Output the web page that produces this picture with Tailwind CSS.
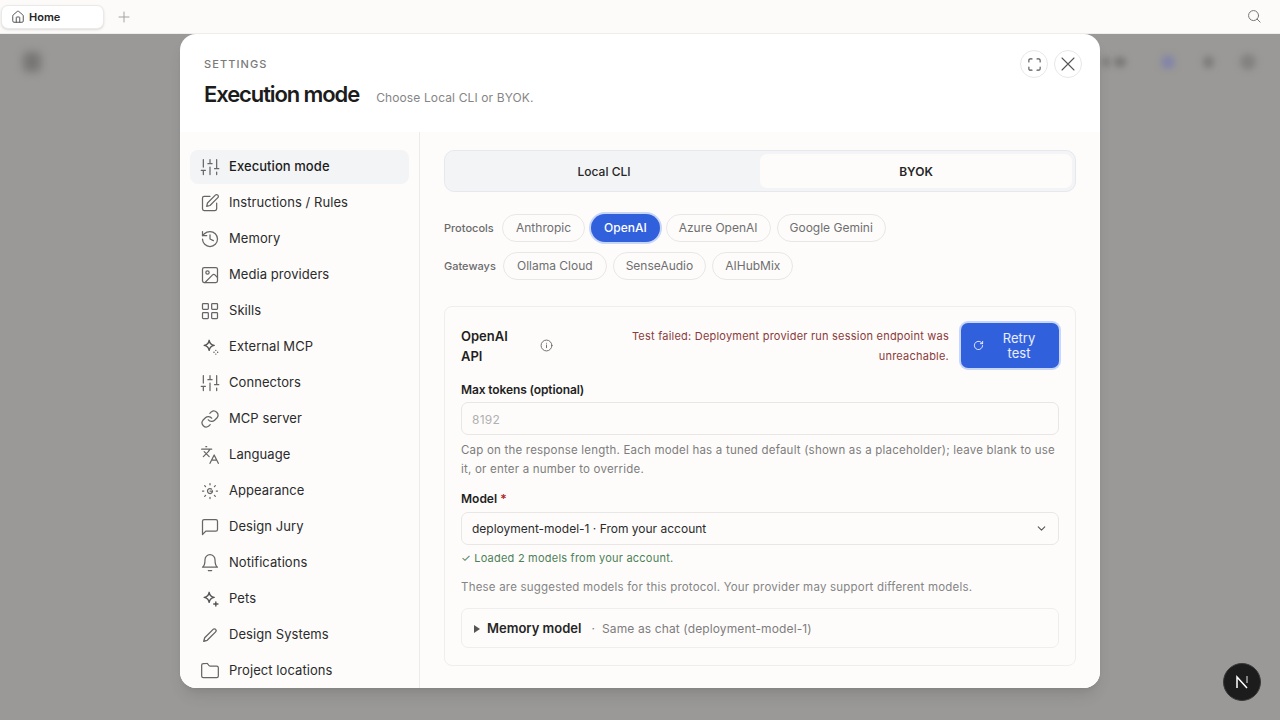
<!DOCTYPE html>
<html lang="en">
<head>
    <meta charset="UTF-8" />
    <meta name="viewport" content="width=device-width, initial-scale=1.0" />
    <script src="https://cdn.jsdelivr.net/npm/@tailwindcss/browser@4"></script>
    <title>Settings</title>
</head>
<body class="bg-[#9a9997] font-['Inter',sans-serif] w-[1280px] h-[720px] overflow-hidden relative">
    <!-- top bar -->
    <div class="h-[34px] bg-[#fcfbfa] border-b border-[#eeedeb] flex items-center pl-[1px] pr-[18px]">
        <div class="w-[103px] h-[24px] mt-[1px] bg-white border border-[#eceae8] rounded-[7px] shadow-sm flex items-center pl-[9px] gap-[4px] text-[11px] font-semibold text-[#262626]">
            <svg class="w-[14px] h-[14px] text-[#555]" viewBox="0 0 24 24" fill="none" stroke="currentColor" stroke-width="1.7" stroke-linecap="round" stroke-linejoin="round"><path d="M15 21v-8a1 1 0 0 0-1-1h-4a1 1 0 0 0-1 1v8"/><path d="M3 10a2 2 0 0 1 .7-1.5l7-6a2 2 0 0 1 2.6 0l7 6A2 2 0 0 1 21 10v9a2 2 0 0 1-2 2H5a2 2 0 0 1-2-2z"/></svg>
            <span class="pt-[1px]">Home</span>
        </div>
        <svg class="w-[12px] h-[12px] ml-[14px] text-[#a3a3a3]" viewBox="0 0 24 24" fill="none" stroke="currentColor" stroke-width="2" stroke-linecap="round"><path d="M12 2v20M2 12h20"/></svg>
        <svg class="w-[15px] h-[15px] ml-auto text-[#777]" viewBox="0 0 24 24" fill="none" stroke="currentColor" stroke-width="1.6" stroke-linecap="round"><circle cx="10.5" cy="10.5" r="8"/><path d="m21 21-4.8-4.8"/></svg>
    </div>

    <!-- blurred things behind the dialog -->
    <div class="absolute left-[23px] top-[52px] w-[18px] h-[20px] rounded-[5px] bg-[#777675] blur-[4px]"></div>
    <div class="absolute left-[1102px] top-[57px] w-[8px] h-[10px] rounded-full bg-[#7f7e7d] blur-[3px]"></div>
    <div class="absolute left-[1114px] top-[57px] w-[12px] h-[10px] rounded-full bg-[#787776] blur-[3px]"></div>
    <div class="absolute left-[1161px] top-[55px] w-[14px] h-[14px] rounded-full bg-[#8385a8] blur-[3px]"></div>
    <div class="absolute left-[1203px] top-[56px] w-[11px] h-[12px] rounded-full bg-[#7d7c7b] blur-[3px]"></div>
    <div class="absolute left-[1240px] top-[54px] w-[16px] h-[16px] rounded-full bg-[#838281] blur-[3px]"></div>

    <!-- dialog -->
    <div class="absolute left-[180px] top-[34px] w-[920px] h-[654px] bg-white rounded-[16px] overflow-hidden flex flex-col shadow-lg">
        <div class="h-[98px] shrink-0 flex items-start justify-between pl-[24px] pr-[18px]">
            <div class="pt-[24px]">
                <div class="text-[11px] leading-[13px] font-medium tracking-[0.1em] text-[#7a7a7a]">SETTINGS</div>
                <div class="flex items-baseline gap-[17px] mt-[9px]">
                    <h1 class="text-[22px] leading-[28px] font-semibold tracking-[-0.05em] text-[#1c1c1c]">Execution mode</h1>
                    <span class="text-[12px] text-[#858585] tracking-[0.01em]">Choose Local CLI or BYOK.</span>
                </div>
            </div>
            <div class="flex gap-[6px] pt-[16px]">
                <div class="w-[28px] h-[28px] rounded-full border border-[#e8e7e5] flex items-center justify-center text-[#555]">
                    <svg class="w-[15px] h-[15px]" viewBox="0 0 24 24" fill="none" stroke="currentColor" stroke-width="1.8" stroke-linecap="round" stroke-linejoin="round"><path d="M3 8V5a2 2 0 0 1 2-2h3M16 3h3a2 2 0 0 1 2 2v3M21 16v3a2 2 0 0 1-2 2h-3M8 21H5a2 2 0 0 1-2-2v-3"/></svg>
                </div>
                <div class="w-[28px] h-[28px] rounded-full border border-[#e8e7e5] flex items-center justify-center text-[#555]">
                    <svg class="w-[16px] h-[16px]" viewBox="0 0 24 24" fill="none" stroke="currentColor" stroke-width="1.6" stroke-linecap="round"><path d="M3 3l18 18M21 3 3 21"/></svg>
                </div>
            </div>
        </div>

        <div class="flex flex-1 min-h-0 bg-[#fdfcfb]">
            <!-- sidebar -->
            <nav class="w-[240px] shrink-0 border-r border-[#ecebe9] pl-[10px] pr-[10px] pt-[18px] overflow-hidden flex flex-col gap-[2px] text-[13px] text-[#2b2b2b] tracking-[0.005em]">
                <div class="h-[34px] shrink-0 rounded-[8px] bg-[#f3f4f6] flex items-center pl-[10px] gap-[9px] font-medium text-[#1c1c1c]">
                    <svg class="w-[20px] h-[20px] shrink-0 text-[#666]" viewBox="0 0 24 24" fill="none" stroke="currentColor" stroke-width="1.5" stroke-linecap="round"><path d="M4 3v9M4 16v5M12 3v5M12 12v9M20 3v11M20 18v3M1.5 16h5M9.5 8h5M17.5 14h5"/></svg>
                    Execution mode
                </div>
                <div class="h-[34px] shrink-0 rounded-[8px] flex items-center pl-[10px] gap-[9px]">
                    <svg class="w-[20px] h-[20px] shrink-0 text-[#666]" viewBox="0 0 24 24" fill="none" stroke="currentColor" stroke-width="1.5" stroke-linecap="round" stroke-linejoin="round"><path d="M12 4H5a2 2 0 0 0-2 2v13a2 2 0 0 0 2 2h13a2 2 0 0 0 2-2v-7"/><path d="M18.4 2.6a2.1 2.1 0 1 1 3 3L12 15l-4 1 1-4z"/></svg>
                    Instructions / Rules
                </div>
                <div class="h-[34px] shrink-0 rounded-[8px] flex items-center pl-[10px] gap-[9px]">
                    <svg class="w-[20px] h-[20px] shrink-0 text-[#666]" viewBox="0 0 24 24" fill="none" stroke="currentColor" stroke-width="1.5" stroke-linecap="round" stroke-linejoin="round"><path d="M3 12a9 9 0 1 0 9-9 9.75 9.75 0 0 0-6.74 2.74L3 8"/><path d="M3 3v5h5"/><path d="M12 7v5l4 2"/></svg>
                    Memory
                </div>
                <div class="h-[34px] shrink-0 rounded-[8px] flex items-center pl-[10px] gap-[9px]">
                    <svg class="w-[20px] h-[20px] shrink-0 text-[#666]" viewBox="0 0 24 24" fill="none" stroke="currentColor" stroke-width="1.5" stroke-linecap="round" stroke-linejoin="round"><rect x="3" y="3" width="18" height="18" rx="2"/><circle cx="9" cy="9" r="2"/><path d="m21 15-3.1-3.1a2 2 0 0 0-2.8 0L6 21"/></svg>
                    Media providers
                </div>
                <div class="h-[34px] shrink-0 rounded-[8px] flex items-center pl-[10px] gap-[9px]">
                    <svg class="w-[20px] h-[20px] shrink-0 text-[#666]" viewBox="0 0 24 24" fill="none" stroke="currentColor" stroke-width="1.5" stroke-linejoin="round"><rect x="3" y="3" width="7" height="7" rx="1"/><rect x="14" y="3" width="7" height="7" rx="1"/><rect x="3" y="14" width="7" height="7" rx="1"/><rect x="14" y="14" width="7" height="7" rx="1"/></svg>
                    Skills
                </div>
                <div class="h-[34px] shrink-0 rounded-[8px] flex items-center pl-[10px] gap-[9px]">
                    <svg class="w-[20px] h-[20px] shrink-0 text-[#555]" viewBox="0 0 24 24" fill="none" stroke="currentColor" stroke-width="1.7" stroke-linecap="round" stroke-linejoin="round"><path d="M11 4c.6 3.600 2.400 5.400 6 6-3.600.6-5.400 2.400-6 6-.6-3.600-2.400-5.400-6-6 3.600-.6 5.400-2.400 6-6z"/><path d="M19 16v.01M19 20.500v.01M16.800 18.300h.01M21.200 18.300h.01"/></svg>
                    External MCP
                </div>
                <div class="h-[34px] shrink-0 rounded-[8px] flex items-center pl-[10px] gap-[9px]">
                    <svg class="w-[20px] h-[20px] shrink-0 text-[#666]" viewBox="0 0 24 24" fill="none" stroke="currentColor" stroke-width="1.5" stroke-linecap="round"><path d="M4 3v9M4 16v5M12 3v5M12 12v9M20 3v11M20 18v3M1.5 16h5M9.500 8h5M17.500 14h5"/></svg>
                    Connectors
                </div>
                <div class="h-[34px] shrink-0 rounded-[8px] flex items-center pl-[10px] gap-[9px]">
                    <svg class="w-[20px] h-[20px] shrink-0 text-[#666]" viewBox="0 0 24 24" fill="none" stroke="currentColor" stroke-width="1.5" stroke-linecap="round" stroke-linejoin="round"><path d="M10 13a5 5 0 0 0 7.500.5l3-3a5 5 0 0 0-7-7l-1.700 1.700"/><path d="M14 11a5 5 0 0 0-7.500-.5l-3 3a5 5 0 0 0 7 7l1.700-1.700"/></svg>
                    MCP server
                </div>
                <div class="h-[34px] shrink-0 rounded-[8px] flex items-center pl-[10px] gap-[9px]">
                    <svg class="w-[20px] h-[20px] shrink-0 text-[#666]" viewBox="0 0 24 24" fill="none" stroke="currentColor" stroke-width="1.5" stroke-linecap="round" stroke-linejoin="round"><path d="m5 8 6 6M4 14l6-6 2-3M2 5h12M7 2h1M22 22l-5-10-5 10M14 18h6"/></svg>
                    Language
                </div>
                <div class="h-[34px] shrink-0 rounded-[8px] flex items-center pl-[10px] gap-[9px]">
                    <svg class="w-[20px] h-[20px] shrink-0 text-[#666]" viewBox="0 0 24 24" fill="none" stroke="currentColor" stroke-width="1.5" stroke-linecap="round"><path d="M15 12a3 3 0 1 1-1-2.200"/><path d="M12 12h3"/><path d="M12 3v1.500M12 19.500V21M5.600 5.600l1.100 1.100M17.300 17.300l1.100 1.100M3 12h1.500M19.500 12H21M6.700 17.300l-1.100 1.100M18.400 5.600l-1.100 1.100"/></svg>
                    Appearance
                </div>
                <div class="h-[34px] shrink-0 rounded-[8px] flex items-center pl-[10px] gap-[9px]">
                    <svg class="w-[20px] h-[20px] shrink-0 text-[#666]" viewBox="0 0 24 24" fill="none" stroke="currentColor" stroke-width="1.5" stroke-linecap="round" stroke-linejoin="round"><path d="M21 15a2 2 0 0 1-2 2H7l-4 4V5a2 2 0 0 1 2-2h14a2 2 0 0 1 2 2z"/></svg>
                    Design Jury
                </div>
                <div class="h-[34px] shrink-0 rounded-[8px] flex items-center pl-[10px] gap-[9px]">
                    <svg class="w-[20px] h-[20px] shrink-0 text-[#666]" viewBox="0 0 24 24" fill="none" stroke="currentColor" stroke-width="1.5" stroke-linecap="round" stroke-linejoin="round"><path d="M6 8a6 6 0 0 1 12 0c0 7 3 9 3 9H3s3-2 3-9"/><path d="M10 21h4"/></svg>
                    Notifications
                </div>
                <div class="h-[34px] shrink-0 rounded-[8px] flex items-center pl-[10px] gap-[9px]">
                    <svg class="w-[20px] h-[20px] shrink-0 text-[#555]" viewBox="0 0 24 24" fill="none" stroke="currentColor" stroke-width="1.7" stroke-linecap="round" stroke-linejoin="round"><path d="M11 4c.6 3.600 2.400 5.400 6 6-3.600.6-5.400 2.400-6 6-.6-3.600-2.400-5.400-6-6 3.600-.6 5.400-2.400 6-6z"/><path d="M19 15.500v5M16.500 18h5"/></svg>
                    Pets
                </div>
                <div class="h-[34px] shrink-0 rounded-[8px] flex items-center pl-[10px] gap-[9px]">
                    <svg class="w-[20px] h-[20px] shrink-0 text-[#666]" viewBox="-4 -4 32 32" fill="none" stroke="currentColor" stroke-width="2.2" stroke-linecap="round" stroke-linejoin="round"><path d="M17 3a2.800 2.800 0 1 1 4 4L7.500 20.500 2 22l1.500-5.500z"/></svg>
                    Design Systems
                </div>
                <div class="h-[34px] shrink-0 rounded-[8px] flex items-center pl-[10px] gap-[9px]">
                    <svg class="w-[20px] h-[20px] shrink-0 text-[#666]" viewBox="0 0 24 24" fill="none" stroke="currentColor" stroke-width="1.5" stroke-linecap="round" stroke-linejoin="round"><path d="M20 20a2 2 0 0 0 2-2V8a2 2 0 0 0-2-2h-7.900a2 2 0 0 1-1.700-.9l-.8-1.200A2 2 0 0 0 7.900 3H4a2 2 0 0 0-2 2v13a2 2 0 0 0 2 2z"/></svg>
                    Project locations
                </div>
            </nav>

            <!-- main panel -->
            <main class="flex-1 min-w-0 pl-[24px] pr-[24px] pt-[18px]">
                <div class="h-[42px] rounded-[10px] bg-[#f3f4f6] border border-[#e6e8ee] p-[3px] grid grid-cols-2 text-[12px] font-medium text-[#262626]">
                    <div class="flex items-center justify-center pt-[2px]">Local CLI</div>
                    <div class="flex items-center justify-center pt-[2px] bg-[#fdfcfb] rounded-[7px] font-semibold">BYOK</div>
                </div>

                <div class="flex items-center mt-[21px] h-[30px] text-[12px] text-[#6f6f6f]">
                    <span class="w-[58px] text-[11px] font-medium text-[#6b6b6b]">Protocols</span>
                    <span class="h-[28px] px-[13px] rounded-full border border-[#e8e7e5] flex items-center">Anthropic</span>
                    <span class="h-[28px] px-[13px] ml-[6px] rounded-full bg-[#3160dd] text-white font-medium flex items-center ring-2 ring-[#c8d6f7]">OpenAI</span>
                    <span class="h-[28px] px-[12px] ml-[6px] rounded-full border border-[#e8e7e5] flex items-center">Azure OpenAI</span>
                    <span class="h-[28px] px-[12px] ml-[6px] rounded-full border border-[#e8e7e5] flex items-center">Google Gemini</span>
                </div>
                <div class="flex items-center mt-[8px] h-[30px] text-[12px] text-[#6f6f6f]">
                    <span class="w-[59px] text-[11px] font-medium text-[#6b6b6b]">Gateways</span>
                    <span class="h-[28px] px-[13px] rounded-full border border-[#e8e7e5] flex items-center">Ollama Cloud</span>
                    <span class="h-[28px] px-[12px] ml-[6px] rounded-full border border-[#e8e7e5] flex items-center">SenseAudio</span>
                    <span class="h-[28px] px-[12px] ml-[6px] rounded-full border border-[#e8e7e5] flex items-center">AIHubMix</span>
                </div>

                <!-- provider card -->
                <section class="mt-[25px] h-[360px] rounded-[8px] border border-[#efeeec] px-[16px] pt-[15px]">
                    <div class="flex items-center justify-between h-[47px]">
                        <div class="w-[50px] text-[13px] leading-[20px] font-semibold text-[#1f1f1f]">OpenAI API</div>
                        <svg class="w-[13px] h-[13px] ml-[29px] shrink-0 text-[#666]" viewBox="0 0 24 24" fill="none" stroke="currentColor" stroke-width="1.700" stroke-linecap="round"><circle cx="12" cy="12" r="10"/><path d="M12 16v-5M12 8h.01"/></svg>
                        <div class="flex-1 text-right text-[11px] leading-[20px] text-[#8c3a3a] tracking-[0.02em] pl-[70px] pr-[12px]">Test failed: Deployment provider run session endpoint was unreachable.</div>
                        <div class="w-[98px] h-[45px] shrink-0 rounded-[7px] bg-[#3160dd] ring-2 ring-[#c8d6f7] flex items-center pl-[12px] text-white/90 text-[13px] leading-[15px] font-normal">
                            <svg class="w-[11px] h-[11px] shrink-0" viewBox="0 0 24 24" fill="none" stroke="currentColor" stroke-width="2" stroke-linecap="round" stroke-linejoin="round"><path d="M21 12a9 9 0 1 1-2.600-6.400L21 8"/><path d="M21 3v5h-5"/></svg>
                            <span class="w-[70px] shrink-0 text-center px-[14px]">Retry test</span>
                        </div>
                    </div>

                    <div class="mt-[13px] text-[12px] leading-[16px] font-semibold tracking-[-0.01em] text-[#1f1f1f]">Max tokens (optional)</div>
                    <div class="mt-[4px] h-[33px] rounded-[7px] border border-[#e8e7e5] flex items-center pl-[10px] pt-[2px] text-[12px] text-[#b0b0b0] tracking-[0.02em]">8192</div>
                    <p class="mt-[6px] text-[11.500px] leading-[19px] text-[#7d7d7d] tracking-[0.018em]">Cap on the response length. Each model has a tuned default (shown as a placeholder); leave blank to use it, or enter a number to override.</p>

                    <div class="mt-[12px] text-[12px] leading-[16px] font-semibold text-[#1f1f1f]">Model <span class="text-[#b3261e]">*</span></div>
                    <div class="mt-[5px] h-[33px] rounded-[7px] border border-[#e8e7e5] flex items-center justify-between pl-[10px] pr-[10px] text-[12px] text-[#2b2b2b]">
                        deployment-model-1 · From your account
                        <svg class="w-[13px] h-[13px] text-[#555]" viewBox="0 0 24 24" fill="none" stroke="currentColor" stroke-width="2" stroke-linecap="round" stroke-linejoin="round"><path d="m6 9 6 6 6-6"/></svg>
                    </div>
                    <div class="mt-[4px] text-[11px] leading-[18px] text-[#4d7f58] tracking-[0.02em]">✓ Loaded 2 models from your account.</div>
                    <div class="mt-[11px] text-[11.500px] leading-[18px] text-[#858585] tracking-[0.018em]">These are suggested models for this protocol. Your provider may support different models.</div>
                    <div class="mt-[12px] h-[40px] rounded-[7px] border border-[#efeeec] flex items-center pl-[12px] pt-[2px]">
                        <span class="w-0 h-0 border-y-[4px] border-y-transparent border-l-[6px] border-l-[#555]"></span>
                        <span class="ml-[7px] text-[13px] font-semibold text-[#262626]">Memory model</span>
                        <span class="ml-[10px] text-[12px] text-[#7d7d7d] tracking-[0.01em]">· &nbsp;Same as chat (deployment-model-1)</span>
                    </div>
                </section>
            </main>
        </div>
    </div>

    <!-- dev badge -->
    <div class="absolute left-[1223px] top-[663px] w-[38px] h-[38px] rounded-full bg-[#1c1c1c] border border-[#3a3a3a] flex items-center justify-center">
        <svg class="w-[14px] h-[14px] text-white" viewBox="0 0 14 14" fill="none" stroke="currentColor" stroke-width="1.500"><path d="M2 13V2l10 11"/><path d="M12 1v7" stroke-opacity=".6"/></svg>
    </div>
</body>
</html>
